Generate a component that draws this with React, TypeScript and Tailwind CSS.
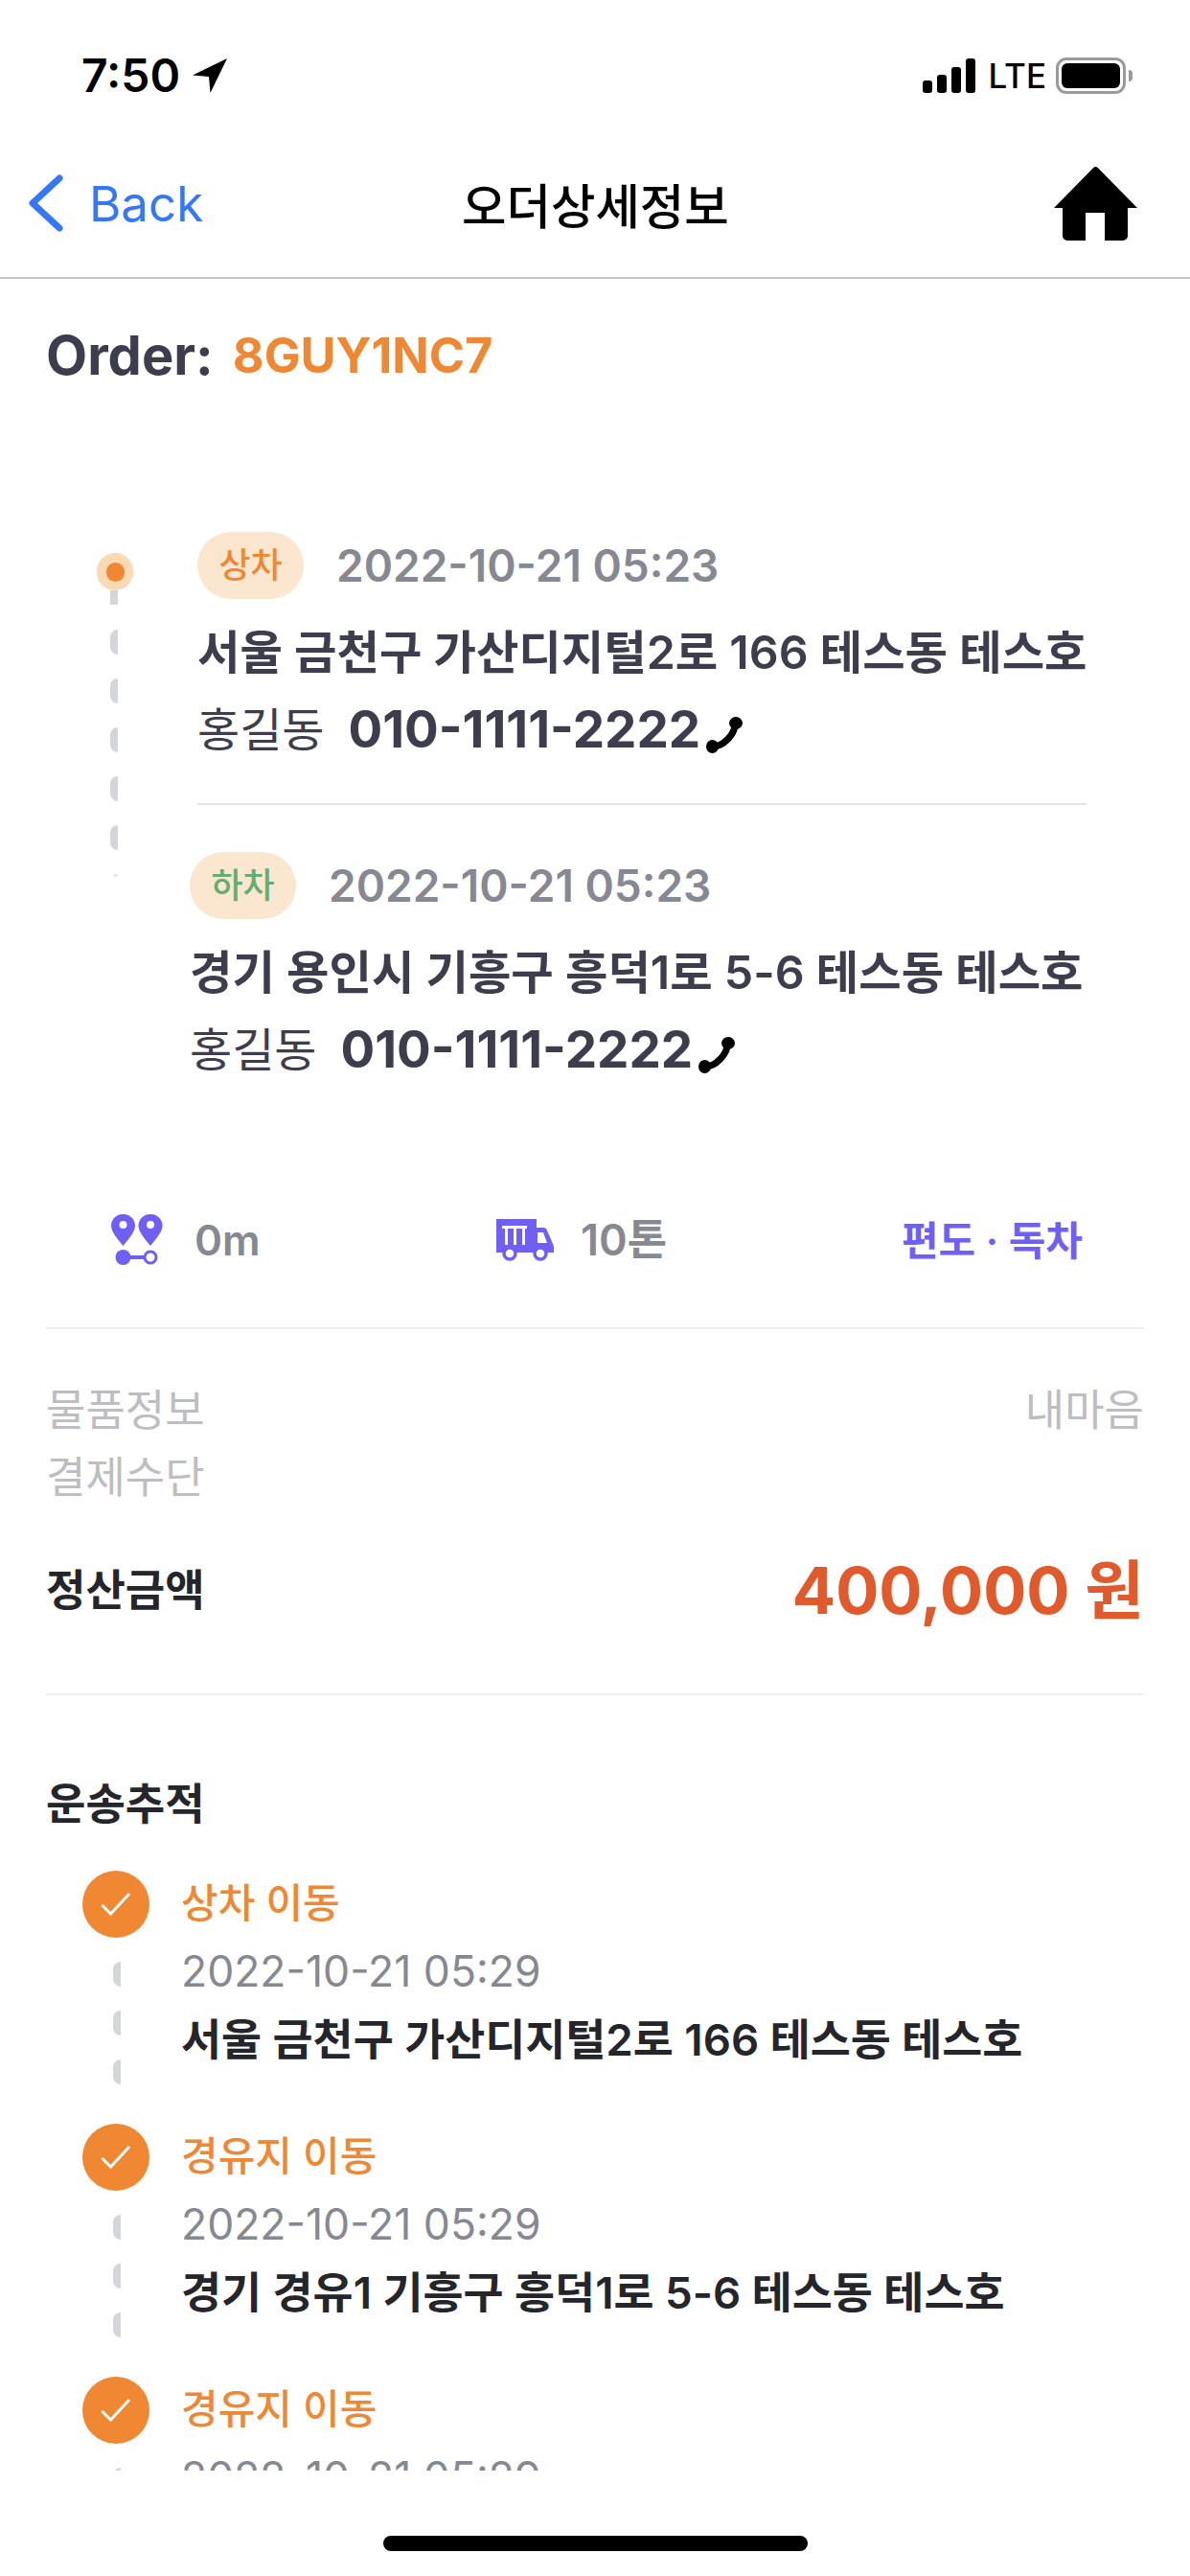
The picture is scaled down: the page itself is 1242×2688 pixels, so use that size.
function PhoneIcon() {
  return (
    <svg viewBox="0 0 40 40" className="w-[40px] h-[40px] mt-[10px] ml-[5px]" fill="#000">
      <path d="M31 9C31 19 19 32 8 32" fill="none" stroke="#000" strokeWidth="7" strokeLinecap="round" />
      <ellipse cx="32" cy="7.500" rx="7" ry="6.500" />
      <ellipse cx="7.500" cy="32" rx="6.500" ry="7" />
    </svg>
  );
}

function DashLine({ count, first, left }: { count: number; first?: boolean; left: string }) {
  return (
    <div className={`flex flex-col gap-[25px] items-start ${left}`}>
      {first && <div className="w-[8px] h-[15px] -mb-[-1px] bg-[#d5d6da]" />}
      {Array.from({ length: count }).map((_, i) => (
        <div key={i} className="w-[8px] h-[26px] bg-[#d5d6da] rounded-l-full" />
      ))}
      {first && <div className="w-[4px] h-[3px] ml-[4px] bg-[#e8e8ea]" />}
    </div>
  );
}

function Stop({ tag, tagColor, addr, shift }: { tag: string; tagColor: string; addr: string; shift: string }) {
  return (
    <div className={shift}>
      <div className="flex items-center h-[70px]">
        <span className={`w-[111px] h-[70px] rounded-full bg-[#fbe6d0] flex items-center justify-center text-[36px] font-medium ${tagColor}`}>
          {tag}
        </span>
        <span className="ml-[34px] text-[46px] font-semibold text-[#868892]">2022-10-21 05:23</span>
      </div>
      <p className="mt-[24px] text-[48.300px] leading-[64px] font-semibold text-[#3d3d4e] whitespace-nowrap">{addr}</p>
      <div className="mt-[17px] flex items-center h-[64px] text-[48px] text-[#3d3d4e] whitespace-nowrap">
        <span>홍길동</span>
        <span className="ml-[25px] text-[53px] font-bold">010-1111-2222</span>
        <PhoneIcon />
      </div>
    </div>
  );
}

function Track({ title, addr }: { title: string; addr: string }) {
  return (
    <div className="flex h-[264px]">
      <div className="w-[70px] shrink-0 flex flex-col">
        <div className="w-[70px] h-[70px] rounded-full bg-[#ef8733] flex items-center justify-center">
          <svg viewBox="0 0 32 26" className="w-[32px] h-[26px]" fill="none" stroke="#fff" strokeWidth="3">
            <path d="M1.500 14l9 9L30 2" />
          </svg>
        </div>
        <div className="mt-[25px]">
          <DashLine count={3} left="pl-[32px]" />
        </div>
      </div>
      <div className="ml-[33px] whitespace-nowrap">
        <p className="h-[70px] leading-[68px] text-[42px] font-medium text-[#ef8733]">{title}</p>
        <p className="h-[71px] leading-[71px] text-[44.500px] text-[#868892]">2022-10-21 05:29</p>
        <p className="h-[71px] leading-[71px] text-[45.700px] font-semibold text-[#25262b]">{addr}</p>
      </div>
    </div>
  );
}

export default function App() {
  return (
    <div className="w-[1242px] h-[2688px] bg-white flex flex-col overflow-hidden font-['Inter','Noto_Sans_CJK_KR',sans-serif]">
      {/* status bar */}
      <div className="h-[140px] shrink-0 flex items-start justify-between pt-[54px] pl-[85px] pr-[60px]">
        <div className="flex items-center gap-[12px] h-[50px]">
          <span className="text-[48px] font-semibold text-black leading-none">7:50</span>
          <svg viewBox="0 0 38 38" className="w-[38px] h-[38px]">
            <path d="M37 1L1 18.500l17 1.500 1.500 17z" fill="#000" />
          </svg>
        </div>
        <div className="flex items-center h-[50px] text-black">
          <div className="flex items-end gap-[5px] h-[36px]">
            <div className="w-[10px] h-[13px] bg-black rounded-[3px]" />
            <div className="w-[10px] h-[19px] bg-black rounded-[3px]" />
            <div className="w-[10px] h-[27px] bg-black rounded-[3px]" />
            <div className="w-[10px] h-[36px] bg-black rounded-[3px]" />
          </div>
          <span className="ml-[14px] text-[35px] font-medium leading-none">LTE</span>
          <div className="ml-[10px] flex items-center">
            <div className="w-[73px] h-[38px] rounded-[11px] border-[3px] border-[#9a9a9a] p-[3px]">
              <div className="w-full h-full bg-black rounded-[6px]" />
            </div>
            <div className="ml-[3px] w-[4px] h-[12px] bg-[#9a9a9a] rounded-r-full" />
          </div>
        </div>
      </div>

      {/* nav */}
      <div className="h-[151px] shrink-0 border-b-[2px] border-[#c4c4c6] relative flex items-center justify-between pl-[30px] pr-[55px] pb-[5px]">
        <div className="flex items-center gap-[27px]">
          <svg viewBox="0 0 36 60" className="w-[36px] h-[60px]" fill="none" stroke="#3478f6" strokeWidth="7" strokeLinecap="round" strokeLinejoin="round">
            <path d="M32 4L4 30l28 26" />
          </svg>
          <span className="text-[51px] text-[#3478f6] leading-none">Back</span>
        </div>
        <span className="absolute left-[482px] top-[41px] text-[50.500px] font-medium text-black leading-[70px]">오더상세정보</span>
        <svg viewBox="0 0 87 77" className="w-[87px] h-[77px]">
          <path d="M41 1.200a3.500 3.500 0 0 1 5 0L87 43H77v29a5 5 0 0 1-5 5H53V48H33v29H14a5 5 0 0 1-5-5V43H0z" fill="#000" />
        </svg>
      </div>

      {/* scroll area */}
      <div className="h-[2287px] shrink-0 overflow-hidden">
        <div className="px-[48px]">
          <div className="pt-[50px] flex items-center h-[110px] font-bold">
            <span className="text-[56px] text-[#3d3d4e]">Order:</span>
            <span className="ml-[20px] text-[50.500px] text-[#ef8733]">8GUY1NC7</span>
          </div>

          {/* route */}
          <div className="mt-[154px] flex">
            <div className="w-[158px] shrink-0 flex flex-col pt-[22px]">
              <div className="ml-[53px] w-[38px] h-[39px] rounded-full bg-[#fbd9b5] flex items-center justify-center">
                <div className="w-[19px] h-[20px] rounded-full bg-[#ef8733]" />
              </div>
              <DashLine count={5} first left="pl-[67px]" />
            </div>
            <div className="w-[928px]">
              <Stop tag="상차" tagColor="text-[#ef8733]" addr="서울 금천구 가산디지털2로 166 테스동 테스호" shift="" />
              <div className="mt-[44px] h-[2px] bg-[#e3e3e8]" />
              <div className="mt-[49px]">
                <Stop tag="하차" tagColor="text-[#64ad73]" addr="경기 용인시 기흥구 흥덕1로 5-6 테스동 테스호" shift="-ml-[8px]" />
              </div>
            </div>
          </div>

          {/* summary */}
          <div className="mt-[136px] flex items-center justify-between h-[60px] pl-[68px] pr-[64px]">
            <div className="flex items-center w-[402px]">
              <svg viewBox="0 0 64 54" className="w-[64px] h-[54px]" fill="#6f5ff2">
                <path fillRule="evenodd" d="M12.500 0C19.500 0 25 5 25 12C25 18 19 25 12.500 33C6 25 0 18 0 12C0 5 5.500 0 12.500 0zM12.500 7a4 4 0 1 0 0 8a4 4 0 0 0 0-8zM41 0C48 0 53.500 5 53.500 12C53.500 18 47.500 25 41 33C34.500 25 28.500 18 28.500 12C28.500 5 34 0 41 0zM41 7a4 4 0 1 0 0 8a4 4 0 0 0 0-8z" />
                <circle cx="12.500" cy="45" r="8" />
                <rect x="18" y="43" width="18" height="4" />
                <circle cx="41" cy="45" r="6" fill="none" stroke="#6f5ff2" strokeWidth="3" />
              </svg>
              <span className="ml-[23px] text-[44px] font-semibold text-[#868892]">0m</span>
            </div>
            <div className="flex items-center flex-1">
              <svg viewBox="0 0 60 44" className="w-[60px] h-[44px]">
                <path d="M0 0h42v9h7q3 0 4 3l6 14q1 2 1 4v5H0z" fill="#6f5ff2" />
                <path d="M6 7h26v3h-2v17h-3V10h-6v17h-3V10h-6v17H9V10H6z" fill="#fff" />
                <path d="M43 14h6l4 11H43z" fill="#fff" />
                <circle cx="14" cy="36" r="6" fill="#fff" stroke="#6f5ff2" strokeWidth="3.500" />
                <circle cx="46" cy="36" r="6" fill="#fff" stroke="#6f5ff2" strokeWidth="3.500" />
              </svg>
              <span className="ml-[28px] text-[45px] font-semibold text-[#868892]">10톤</span>
            </div>
            <span className="text-[42px] font-semibold text-[#6f5ff2]">편도 · 독차</span>
          </div>
          <div className="mt-[61px] h-[2px] bg-[#eeeef1]" />

          {/* payment */}
          <div className="pt-[50px] text-[45px] text-[#bdbdc2]">
            <div className="flex justify-between h-[70px] leading-[70px]">
              <span>물품정보</span>
              <span>내마음</span>
            </div>
            <div className="h-[70px] leading-[70px]">결제수단</div>
            <div className="mt-[43px] flex items-center justify-between h-[80px]">
              <span className="font-semibold text-[#25262b]">정산금액</span>
              <span className="text-[67px] font-bold text-[#e05a2b]">400,000 원</span>
            </div>
          </div>
          <div className="mt-[67px] h-[2px] bg-[#eeeef1]" />

          {/* tracking */}
          <p className="mt-[84px] text-[45px] leading-[60px] font-semibold text-[#25262b]">운송추적</p>
          <div className="mt-[39px] ml-[38px]">
            <Track title="상차 이동" addr="서울 금천구 가산디지털2로 166 테스동 테스호" />
            <Track title="경유지 이동" addr="경기 경유1 기흥구 흥덕1로 5-6 테스동 테스호" />
            <Track title="경유지 이동" addr="경기 경유1 기흥구 흥덕1로 5-6 테스동 테스호" />
          </div>
        </div>
      </div>

      {/* home indicator */}
      <div className="flex-1 flex justify-center pt-[68px]">
        <div className="w-[443px] h-[16px] bg-black rounded-full" />
      </div>
    </div>
  );
}
